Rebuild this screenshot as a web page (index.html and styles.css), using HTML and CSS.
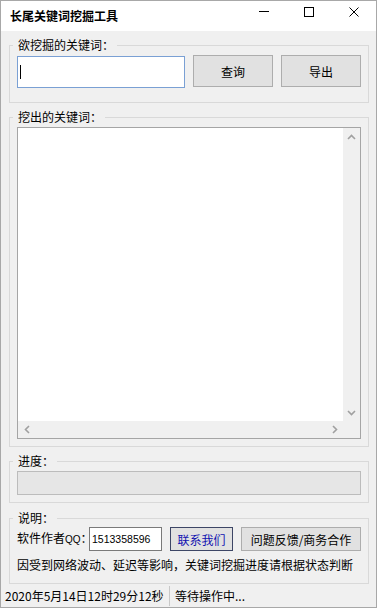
FILE: index.html
```html
<!DOCTYPE html>
<html lang="zh-CN">
<head>
<meta charset="utf-8">
<title>长尾关键词挖掘工具</title>
<link rel="stylesheet" href="styles.css">
</head>
<body>
<div class="window">
  <div class="titlebar">
    <span class="title">长尾关键词挖掘工具</span>
    <div class="controls">
      <span class="ctl"><svg width="12" height="12" viewBox="0 0 12 12"><path d="M1 5.5H11" stroke="#000" stroke-width="1"/></svg></span>
      <span class="ctl"><svg width="12" height="12" viewBox="0 0 12 12"><rect x="1.5" y="1.5" width="9" height="9" fill="none" stroke="#000" stroke-width="1"/></svg></span>
      <span class="ctl"><svg width="12" height="12" viewBox="0 0 12 12"><path d="M1.5 1.5L10.5 10.5M10.5 1.5L1.5 10.5" stroke="#000" stroke-width="1"/></svg></span>
    </div>
  </div>
  <div class="client">
    <fieldset class="group g1">
      <legend>欲挖掘的关键词：</legend>
      <div class="row1">
        <div class="textbox focus"><span class="caret"></span></div>
        <button class="btn">查询</button>
        <button class="btn">导出</button>
      </div>
    </fieldset>
    <fieldset class="group g2">
      <legend>挖出的关键词：</legend>
      <div class="listbox">
        <div class="list-content"></div>
        <div class="vscroll">
          <span class="arrow"><svg width="9" height="6" viewBox="0 0 9 6"><path d="M1 5L4.5 1.5L8 5" fill="none" stroke="#a0a0a0" stroke-width="1.6"/></svg></span>
          <span class="arrow"><svg width="9" height="6" viewBox="0 0 9 6"><path d="M1 1L4.5 4.5L8 1" fill="none" stroke="#a0a0a0" stroke-width="1.6"/></svg></span>
        </div>
        <div class="hscroll">
          <span class="arrow"><svg width="6" height="9" viewBox="0 0 6 9"><path d="M5 1L1.5 4.5L5 8" fill="none" stroke="#a0a0a0" stroke-width="1.6"/></svg></span>
          <span class="arrow"><svg width="6" height="9" viewBox="0 0 6 9"><path d="M1 1L4.5 4.5L1 8" fill="none" stroke="#a0a0a0" stroke-width="1.6"/></svg></span>
        </div>
        <div class="corner"></div>
      </div>
    </fieldset>
    <fieldset class="group g3">
      <legend>进度：</legend>
      <div class="progress"></div>
    </fieldset>
    <fieldset class="group g4">
      <legend>说明：</legend>
      <div class="row4">
        <span class="qq-label">软件作者<span class="half">QQ</span>：</span>
        <div class="textbox qq">1513358596</div>
        <button class="btn contact">联系我们</button>
        <button class="btn feedback">问题反馈/商务合作</button>
      </div>
      <div class="note">因受到网络波动、延迟等影响，关键词挖掘进度请根据状态判断</div>
    </fieldset>
    <div class="statusbar">
      <span class="panel time">2020年5月14日12时29分12秒</span>
      <span class="panel state">等待操作中...</span>
    </div>
  </div>
</div>
</body>
</html>
```
FILE: styles.css
```css
html, body {
  margin: 0;
  padding: 0;
  background: #ffffff;
}
body {
  font-family: "Noto Sans CJK SC", "Noto Sans", sans-serif;
  font-size: 12px;
  color: #000;
}
.window {
  width: 377px;
  height: 608px;
  box-sizing: border-box;
  border: 1px solid #a8a8a8;
  background: #f0f0f0;
  display: flex;
  flex-direction: column;
}
.titlebar {
  height: 30px;
  flex: none;
  background: #ffffff;
  display: flex;
  align-items: center;
  justify-content: space-between;
}
.title {
  padding-left: 9px;
  font-weight: bold;
  line-height: 16px;
}
.controls {
  display: flex;
  align-self: flex-start;
  height: 22px;
}
.ctl {
  width: 45px;
  height: 22px;
  display: flex;
  align-items: center;
  justify-content: center;
}
.client {
  flex: 1;
  display: flex;
  flex-direction: column;
}
.group {
  margin: 6px 0 0 8px;
  width: 360px;
  box-sizing: border-box;
  border: 1px solid #d9d9d9;
  padding: 2px 7px 7px 7px;
  min-width: 0;
}
.group legend {
  padding: 0 3px 0 5px;
  margin-left: -4px;
  line-height: 16px;
  font-size: 12px;
}
.g1 {
  padding-bottom: 14px;
}
.g4 {
  margin-top: 7px;
  padding-top: 1px;
  padding-bottom: 10px;
}
.row1 {
  display: flex;
  height: 33px;
  align-items: flex-start;
  gap: 8px;
}
.textbox {
  box-sizing: border-box;
  background: #ffffff;
  border: 1px solid #7a7a7a;
}
.textbox.focus {
  width: 168px;
  height: 32px;
  margin-top: 1px;
  border-color: #7aa0d4;
  padding: 8px 0 0 2px;
}
.caret {
  display: block;
  width: 1px;
  height: 14px;
  background: #000;
}
.btn {
  box-sizing: border-box;
  width: 80px;
  height: 32px;
  margin: 0;
  padding: 0;
  background: #e1e1e1;
  border: 1px solid #adadad;
  font-family: inherit;
  font-size: 12px;
  color: #000;
}
.listbox {
  height: 312px;
  box-sizing: border-box;
  border: 1px solid #a5a5a5;
  display: grid;
  grid-template-columns: 1fr 17px;
  grid-template-rows: 1fr 17px;
}
.list-content {
  background: #ffffff;
}
.vscroll, .hscroll, .corner {
  background: #f0f0f0;
}
.vscroll {
  display: flex;
  flex-direction: column;
  justify-content: space-between;
}
.hscroll {
  display: flex;
  justify-content: space-between;
}
.arrow {
  width: 17px;
  height: 17px;
  display: flex;
  align-items: center;
  justify-content: center;
}
.progress {
  height: 24px;
  box-sizing: border-box;
  border: 1px solid #bcbcbc;
  background: #e6e6e6;
}
.row4 {
  display: flex;
  align-items: center;
  height: 24px;
}
.qq-label {
  width: 72px;
  flex: none;
  white-space: nowrap;
  line-height: 16px;
}
.half {
  font-family: "Liberation Sans", sans-serif;
  font-size: 10px;
}
.textbox.qq {
  width: 73px;
  height: 24px;
  padding-left: 2px;
  font-family: "Liberation Sans", sans-serif;
  font-size: 10.5px;
  line-height: 22px;
}
.contact {
  width: 63px;
  height: 24px;
  margin-left: 8px;
  color: #1010b0;
  border-color: #3d4666;
}
.feedback {
  width: 120px;
  height: 24px;
  margin-left: 8px;
}
.note {
  margin-top: 6px;
  line-height: 16px;
  white-space: nowrap;
}
.statusbar {
  margin-top: auto;
  height: 22px;
  display: flex;
  align-items: center;
  line-height: 16px;
}
.panel.time {
  width: 164px;
  padding-left: 4px;
  border-right: 1px solid #c8c8c8;
  height: 20px;
  display: flex;
  align-items: center;
}
.panel.state {
  padding-left: 5px;
}
```
